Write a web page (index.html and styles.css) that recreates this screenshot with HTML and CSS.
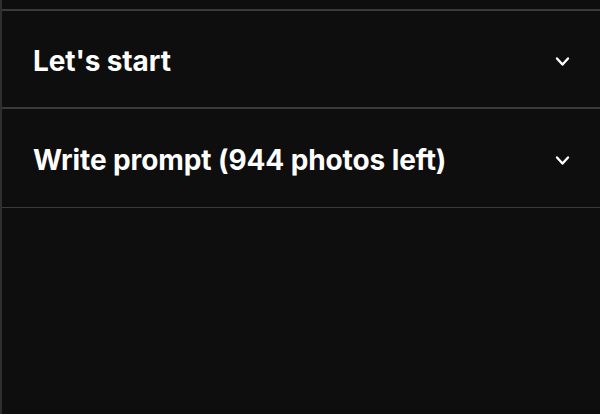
FILE: index.html
```html
<!DOCTYPE html>
<html>

<head>
    <title>Prompt</title>
    <meta name="viewport" content="width=device-width, initial-scale=1.0">
    <link rel="stylesheet" href="styles.css">
</head>

<body>
    <div class="panel">
        <div class="section">
            <span class="title">Let's start</span>
            <svg class="chevron" width="15" height="11" viewBox="0 0 15 11">
                <path d="M2 2.5 L7.5 8.5 L13 2.5" fill="none" stroke="#fff" stroke-width="2.4" stroke-linecap="round" stroke-linejoin="round"/>
            </svg>
        </div>
        <div class="section">
            <span class="title">Write prompt (944 photos left)</span>
            <svg class="chevron" width="15" height="11" viewBox="0 0 15 11">
                <path d="M2 2.5 L7.5 8.5 L13 2.5" fill="none" stroke="#fff" stroke-width="2.4" stroke-linecap="round" stroke-linejoin="round"/>
            </svg>
        </div>
    </div>
</body>

</html>
```

FILE: styles.css
```css
html, body {
    height: 100%;
}

body {
    font-family: Inter, 'Liberation Sans', sans-serif;
    background-color: #0e0e0e;
    margin: 0;
}

.panel {
    height: 100%;
    box-sizing: border-box;
    padding-top: 9px;
    border-left: 2px solid #2f2f2f;
}

.section {
    display: flex;
    align-items: center;
    justify-content: space-between;
    height: 96px;
    padding: 0 30px 0 31px;
    border-top: 2px solid #3a3a3a;
}

.section:last-child {
    height: 98px;
    border-bottom: 1px solid #3a3a3a;
}

.title {
    color: #fff;
    font-size: 28px;
    font-weight: 700;
    letter-spacing: -0.1px;
    padding-top: 3px;
}

.chevron {
    display: block;
    margin-top: 4px;
}
```
